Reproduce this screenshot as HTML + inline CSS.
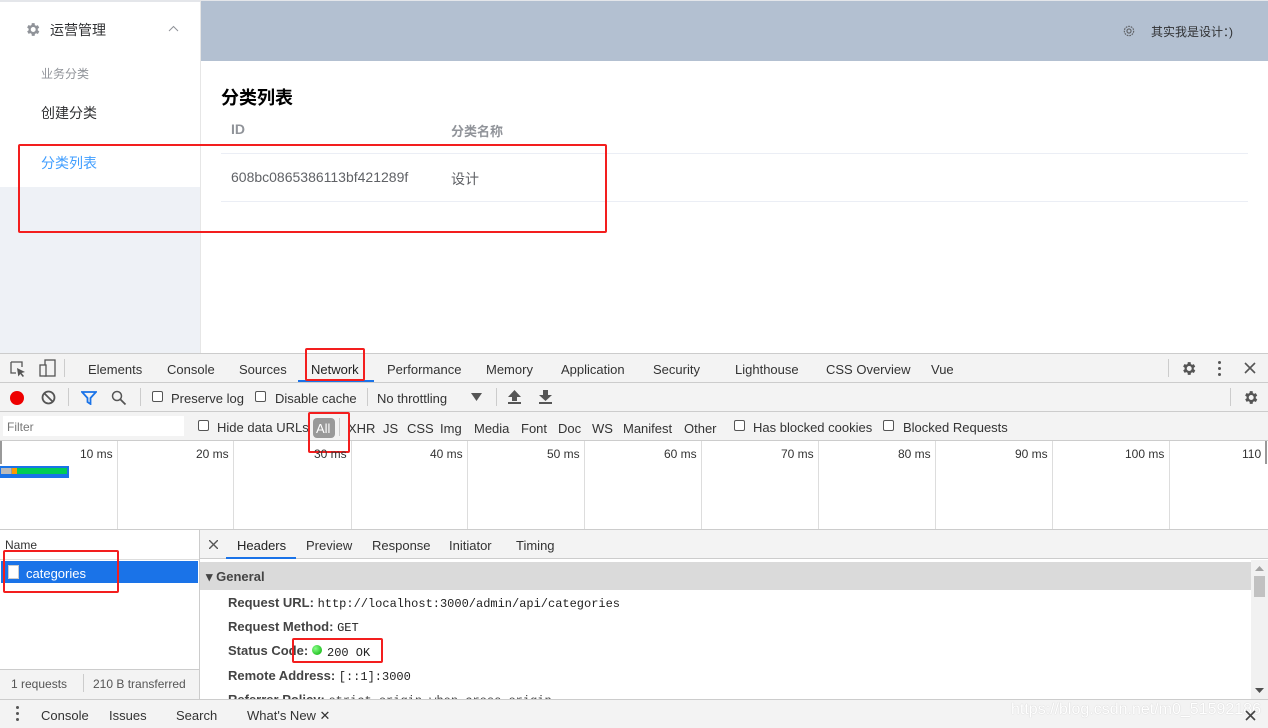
<!DOCTYPE html>
<html><head><meta charset="utf-8"><style>
*{margin:0;padding:0;box-sizing:border-box}
body{width:1268px;height:728px;overflow:hidden;position:relative;background:#fff;font-family:"Liberation Sans","Noto Sans CJK SC",sans-serif;color:#333}
.a{position:absolute;white-space:nowrap}
.t{font-size:13px;color:#333}
.cb{position:absolute;width:11px;height:11px;border:1px solid #555;border-radius:2px;background:#fff}
.red{position:absolute;border:2px solid #f31e1e;border-radius:2px}
.vl{position:absolute;width:1px;background:#ccc}
.mono{font-family:"Liberation Mono",monospace;font-size:12px}
</style></head><body>
<!-- app -->
<div class="a" style="left:0;top:0;width:1268px;height:2px;background:#e4e6ea"></div>
<div class="a" style="left:0;top:2px;width:201px;height:185px;background:#fff"></div>
<div class="a" style="left:0;top:187px;width:201px;height:166px;background:#eef1f6"></div>
<div class="a" style="left:200px;top:0;width:1px;height:353px;background:#e6e6e6"></div>
<div class="a" style="left:201px;top:1px;width:1067px;height:60px;background:#b3c0d1"></div>
<svg class="a" style="left:24px;top:21px" width="17" height="17" viewBox="0 0 24 24"><path fill="#909399" d="M19.4 13a7.5 7.5 0 0 0 0-2l2.1-1.6-2-3.5-2.5 1a7 7 0 0 0-1.7-1L15 3h-4l-.4 2.7a7 7 0 0 0-1.7 1l-2.5-1-2 3.5L6.6 11a7.5 7.5 0 0 0 0 2l-2.1 1.6 2 3.5 2.5-1a7 7 0 0 0 1.7 1L11 21h4l.4-2.7a7 7 0 0 0 1.7-1l2.5 1 2-3.5zM13 15.5a3.5 3.5 0 1 1 0-7 3.5 3.5 0 0 1 0 7z"/></svg>
<div class="a" style="left:50px;top:20px;font-size:14px;color:#303133">运营管理</div>
<svg class="a" style="left:168px;top:25px" width="11" height="7"><path d="M1 6L5.5 1.5 10 6" fill="none" stroke="#909399" stroke-width="1"/></svg>
<div class="a" style="left:41px;top:65px;font-size:12px;color:#909399">业务分类</div>
<div class="a" style="left:41px;top:103px;font-size:14px;color:#303133">创建分类</div>
<div class="a" style="left:41px;top:153px;font-size:14px;color:#409eff">分类列表</div>
<svg class="a" style="left:1122px;top:24px" width="14" height="14" viewBox="0 0 24 24"><circle cx="12" cy="12" r="8" fill="none" stroke="#606266" stroke-width="2" stroke-dasharray="3 1.5"/><circle cx="12" cy="12" r="3.5" fill="none" stroke="#606266" stroke-width="2"/></svg>
<div class="a" style="left:1151px;top:23px;font-size:12px;color:#303133">其实我是设计：)</div>
<div class="a" style="left:221px;top:84px;font-size:18px;font-weight:bold;color:#000">分类列表</div>
<div class="a" style="left:231px;top:121px;font-size:14px;font-weight:bold;color:#909399">ID</div>
<div class="a" style="left:451px;top:121px;font-size:13px;font-weight:bold;color:#909399">分类名称</div>
<div class="a" style="left:221px;top:153px;width:1027px;height:1px;background:#ebeef5"></div>
<div class="a" style="left:231px;top:169px;font-size:14px;color:#606266">608bc0865386113bf421289f</div>
<div class="a" style="left:451px;top:169px;font-size:14px;color:#606266">设计</div>
<div class="a" style="left:221px;top:201px;width:1027px;height:1px;background:#ebeef5"></div>
<div class="red" style="left:18px;top:144px;width:589px;height:89px"></div>

<!-- devtools tabs -->
<div class="a" style="left:0;top:353px;width:1268px;height:30px;background:#f3f3f3;border-top:1px solid #ccc;border-bottom:1px solid #ccc"></div>
<svg class="a" style="left:9px;top:360px" width="18" height="18"><path d="M2 2h11v5M2 2v11h5" fill="none" stroke="#555" stroke-width="1.3"/><path d="M8 8l8 4-3.5 1 2.5 3-1.2 1-2.5-3-2 2.5z" fill="#555"/></svg>
<svg class="a" style="left:38px;top:359px" width="20" height="20"><rect x="7" y="1" width="10" height="16" fill="none" stroke="#555" stroke-width="1.3"/><rect x="2" y="6" width="6" height="11" fill="#f3f3f3" stroke="#555" stroke-width="1.3"/></svg>
<div class="vl" style="left:64px;top:359px;height:18px"></div>
<div class="a t" style="left:88px;top:362px">Elements</div>
<div class="a t" style="left:167px;top:362px">Console</div>
<div class="a t" style="left:239px;top:362px">Sources</div>
<div class="a t" style="left:311px;top:362px;color:#222">Network</div>
<div class="a" style="left:298px;top:380px;width:76px;height:2px;background:#1a73e8"></div>
<div class="a t" style="left:387px;top:362px">Performance</div>
<div class="a t" style="left:486px;top:362px">Memory</div>
<div class="a t" style="left:561px;top:362px">Application</div>
<div class="a t" style="left:653px;top:362px">Security</div>
<div class="a t" style="left:735px;top:362px">Lighthouse</div>
<div class="a t" style="left:826px;top:362px">CSS Overview</div>
<div class="a t" style="left:931px;top:362px">Vue</div>
<div class="vl" style="left:1168px;top:359px;height:18px"></div>
<svg class="a" style="left:1180px;top:360px" width="17" height="17" viewBox="0 0 24 24"><path fill="#555" d="M19.4 13a7.5 7.5 0 0 0 0-2l2.1-1.6-2-3.5-2.5 1a7 7 0 0 0-1.7-1L15 3h-4l-.4 2.7a7 7 0 0 0-1.7 1l-2.5-1-2 3.5L6.6 11a7.5 7.5 0 0 0 0 2l-2.1 1.6 2 3.5 2.5-1a7 7 0 0 0 1.7 1L11 21h4l.4-2.7a7 7 0 0 0 1.7-1l2.5 1 2-3.5zM13 15.5a3.5 3.5 0 1 1 0-7 3.5 3.5 0 0 1 0 7z"/></svg>
<div class="a" style="left:1218px;top:361px;width:3px;height:3px;background:#555;border-radius:50%;box-shadow:0 6px 0 #555,0 12px 0 #555"></div>
<svg class="a" style="left:1244px;top:362px" width="12" height="12"><path d="M1 1l10 10M11 1L1 11" stroke="#555" stroke-width="1.6"/></svg>
<div class="red" style="left:305px;top:348px;width:60px;height:33px"></div>

<!-- toolbar -->
<div class="a" style="left:0;top:383px;width:1268px;height:29px;background:#f3f3f3;border-bottom:1px solid #ccc"></div>
<div class="a" style="left:10px;top:391px;width:14px;height:14px;border-radius:50%;background:#e00"></div>
<svg class="a" style="left:41px;top:390px" width="15" height="15"><circle cx="7.5" cy="7.5" r="6" fill="none" stroke="#555" stroke-width="1.8"/><path d="M3.5 3.5l8 8" stroke="#555" stroke-width="1.8"/></svg>
<div class="vl" style="left:68px;top:388px;height:18px"></div>
<svg class="a" style="left:81px;top:391px" width="16" height="14"><path d="M1 1h14l-5.5 6v6l-3-2V7z" fill="none" stroke="#1a73e8" stroke-width="1.8"/></svg>
<svg class="a" style="left:111px;top:390px" width="16" height="16"><circle cx="6" cy="6" r="4.5" fill="none" stroke="#555" stroke-width="1.5"/><path d="M9.5 9.5l5 5" stroke="#555" stroke-width="1.8"/></svg>
<div class="vl" style="left:140px;top:388px;height:18px"></div>
<div class="cb" style="left:152px;top:391px"></div>
<div class="a t" style="left:171px;top:391px">Preserve log</div>
<div class="cb" style="left:255px;top:391px"></div>
<div class="a t" style="left:275px;top:391px">Disable cache</div>
<div class="vl" style="left:367px;top:388px;height:18px"></div>
<div class="a t" style="left:377px;top:391px">No throttling</div>
<svg class="a" style="left:471px;top:393px" width="11" height="8"><path d="M0 0h11L5.5 8z" fill="#555"/></svg>
<div class="vl" style="left:496px;top:388px;height:18px"></div>
<svg class="a" style="left:508px;top:390px" width="13" height="14"><path d="M6.5 0L13 7H9v4H4V7H0z M0 12h13v2H0z" fill="#555"/></svg>
<svg class="a" style="left:539px;top:390px" width="13" height="14"><path d="M4 0h5v5h4L6.5 11 0 5h4z M0 12h13v2H0z" fill="#555"/></svg>
<div class="vl" style="left:1230px;top:388px;height:18px"></div>
<svg class="a" style="left:1242px;top:389px" width="17" height="17" viewBox="0 0 24 24"><path fill="#555" d="M19.4 13a7.5 7.5 0 0 0 0-2l2.1-1.6-2-3.5-2.5 1a7 7 0 0 0-1.7-1L15 3h-4l-.4 2.7a7 7 0 0 0-1.7 1l-2.5-1-2 3.5L6.6 11a7.5 7.5 0 0 0 0 2l-2.1 1.6 2 3.5 2.5-1a7 7 0 0 0 1.7 1L11 21h4l.4-2.7a7 7 0 0 0 1.7-1l2.5 1 2-3.5zM13 15.5a3.5 3.5 0 1 1 0-7 3.5 3.5 0 0 1 0 7z"/></svg>

<!-- filter bar -->
<div class="a" style="left:0;top:412px;width:1268px;height:29px;background:#f3f3f3;border-bottom:1px solid #ccc"></div>
<div class="a" style="left:3px;top:416px;width:181px;height:20px;background:#fff"></div>
<div class="a" style="left:7px;top:420px;font-size:12px;color:#777">Filter</div>
<div class="cb" style="left:198px;top:420px"></div>
<div class="a t" style="left:217px;top:420px">Hide data URLs</div>
<div class="a" style="left:313px;top:418px;width:22px;height:20px;background:#999;border-radius:4px"></div>
<div class="a t" style="left:316px;top:421px;color:#fff">All</div>
<div class="vl" style="left:339px;top:418px;height:18px"></div>
<div class="a t" style="left:348px;top:421px">XHR</div>
<div class="a t" style="left:383px;top:421px">JS</div>
<div class="a t" style="left:407px;top:421px">CSS</div>
<div class="a t" style="left:440px;top:421px">Img</div>
<div class="a t" style="left:474px;top:421px">Media</div>
<div class="a t" style="left:521px;top:421px">Font</div>
<div class="a t" style="left:558px;top:421px">Doc</div>
<div class="a t" style="left:592px;top:421px">WS</div>
<div class="a t" style="left:623px;top:421px">Manifest</div>
<div class="a t" style="left:684px;top:421px">Other</div>
<div class="cb" style="left:734px;top:420px"></div>
<div class="a t" style="left:753px;top:420px">Has blocked cookies</div>
<div class="cb" style="left:883px;top:420px"></div>
<div class="a t" style="left:903px;top:420px">Blocked Requests</div>
<div class="red" style="left:308px;top:412px;width:42px;height:41px"></div>

<!-- timeline -->
<div class="a" style="left:0;top:441px;width:2px;height:23px;background:#999"></div>
<div class="vl" style="left:117px;top:441px;height:88px;background:#ddd"></div>
<div class="vl" style="left:233px;top:441px;height:88px;background:#ddd"></div>
<div class="vl" style="left:351px;top:441px;height:88px;background:#ddd"></div>
<div class="vl" style="left:467px;top:441px;height:88px;background:#ddd"></div>
<div class="vl" style="left:584px;top:441px;height:88px;background:#ddd"></div>
<div class="vl" style="left:701px;top:441px;height:88px;background:#ddd"></div>
<div class="vl" style="left:818px;top:441px;height:88px;background:#ddd"></div>
<div class="vl" style="left:935px;top:441px;height:88px;background:#ddd"></div>
<div class="vl" style="left:1052px;top:441px;height:88px;background:#ddd"></div>
<div class="vl" style="left:1169px;top:441px;height:88px;background:#ddd"></div>
<div class="a" style="left:1265px;top:441px;width:2px;height:23px;background:#999"></div>
<div class="a t" style="left:80px;top:447px;font-size:12px">10 ms</div>
<div class="a t" style="left:196px;top:447px;font-size:12px">20 ms</div>
<div class="a t" style="left:314px;top:447px;font-size:12px">30 ms</div>
<div class="a t" style="left:430px;top:447px;font-size:12px">40 ms</div>
<div class="a t" style="left:547px;top:447px;font-size:12px">50 ms</div>
<div class="a t" style="left:664px;top:447px;font-size:12px">60 ms</div>
<div class="a t" style="left:781px;top:447px;font-size:12px">70 ms</div>
<div class="a t" style="left:898px;top:447px;font-size:12px">80 ms</div>
<div class="a t" style="left:1015px;top:447px;font-size:12px">90 ms</div>
<div class="a t" style="left:1125px;top:447px;font-size:12px">100 ms</div>
<div class="a t" style="left:1242px;top:447px;font-size:12px">110</div>
<div class="a" style="left:0;top:466px;width:69px;height:12px;background:#1a73e8"></div>
<div class="a" style="left:1px;top:468px;width:66px;height:6px;background:#0c5"></div>
<div class="a" style="left:1px;top:468px;width:10px;height:6px;background:#bbb"></div>
<div class="a" style="left:11px;top:468px;width:5px;height:6px;background:#999"></div>
<div class="a" style="left:12px;top:468px;width:5px;height:6px;background:#f90"></div>
<div class="a" style="left:0;top:529px;width:1268px;height:1px;background:#ccc"></div>

<!-- bottom panes -->
<div class="a" style="left:0;top:530px;width:199px;height:139px;background:#fff"></div>
<div class="a" style="left:199px;top:530px;width:1px;height:169px;background:#ccc"></div>
<div class="a" style="left:0;top:559px;width:199px;height:1px;background:#ddd"></div>
<div class="a t" style="left:5px;top:538px;font-size:12px">Name</div>
<div class="a" style="left:1px;top:561px;width:197px;height:22px;background:#1a73e8"></div>
<div class="a" style="left:8px;top:565px;width:11px;height:14px;background:#fff;border:1px solid #ccc"></div>
<div class="a t" style="left:26px;top:566px;color:#fff">categories</div>
<div class="red" style="left:3px;top:550px;width:116px;height:43px"></div>
<div class="a" style="left:0;top:669px;width:199px;height:30px;background:#f3f3f3;border-top:1px solid #ccc"></div>
<div class="a t" style="left:11px;top:677px;font-size:12px;color:#555">1 requests</div>
<div class="vl" style="left:83px;top:674px;height:18px"></div>
<div class="a t" style="left:93px;top:677px;font-size:12px;color:#555">210 B transferred</div>

<div class="a" style="left:200px;top:530px;width:1068px;height:29px;background:#f3f3f3;border-bottom:1px solid #ccc"></div>
<svg class="a" style="left:209px;top:540px" width="9" height="9"><path d="M0 0l9 9M9 0L0 9" stroke="#555" stroke-width="1.4"/></svg>
<div class="a t" style="left:237px;top:538px;color:#222">Headers</div>
<div class="a" style="left:226px;top:557px;width:70px;height:2px;background:#1a73e8"></div>
<div class="a t" style="left:306px;top:538px">Preview</div>
<div class="a t" style="left:372px;top:538px">Response</div>
<div class="a t" style="left:449px;top:538px">Initiator</div>
<div class="a t" style="left:516px;top:538px">Timing</div>
<div class="a" style="left:200px;top:562px;width:1051px;height:28px;background:#dadada"></div>
<div class="a t" style="left:206px;top:569px;font-size:13px;font-weight:bold;color:#444">▾ General</div>
<div class="a" style="left:1251px;top:560px;width:17px;height:139px;background:#f1f1f1"></div>
<div class="a" style="left:1254px;top:576px;width:11px;height:21px;background:#c1c1c1"></div>
<svg class="a" style="left:1255px;top:566px" width="9" height="5"><path d="M0 5L4.5 0 9 5z" fill="#a3a3a3"/></svg>
<svg class="a" style="left:1255px;top:688px" width="9" height="5"><path d="M0 0h9L4.5 5z" fill="#505050"/></svg>
<div class="a t" style="left:228px;top:595px;font-weight:bold;color:#444">Request URL: <span class="mono" style="font-weight:normal;color:#222">http://localhost:3000/admin/api/categories</span></div>
<div class="a t" style="left:228px;top:619px;font-weight:bold;color:#444">Request Method: <span class="mono" style="font-weight:normal;color:#222">GET</span></div>
<div class="a t" style="left:228px;top:643px;font-weight:bold;color:#444">Status Code:</div>
<div class="a" style="left:312px;top:645px;width:10px;height:10px;border-radius:50%;background:radial-gradient(circle at 35% 35%,#8f8,#0a0)"></div>
<div class="a mono" style="left:327px;top:646px;color:#222">200 OK</div>
<div class="red" style="left:292px;top:638px;width:91px;height:25px"></div>
<div class="a t" style="left:228px;top:668px;font-weight:bold;color:#444">Remote Address: <span class="mono" style="font-weight:normal;color:#222">[::1]:3000</span></div>
<div class="a t" style="left:228px;top:692px;font-weight:bold;color:#444;height:7px;overflow:hidden">Referrer Policy: <span class="mono" style="font-weight:normal">strict-origin-when-cross-origin</span></div>

<!-- drawer -->
<div class="a" style="left:0;top:699px;width:1268px;height:29px;background:#f3f3f3;border-top:1px solid #ccc"></div>
<div class="a" style="left:16px;top:706px;width:3px;height:3px;background:#555;border-radius:50%;box-shadow:0 6px 0 #555,0 12px 0 #555"></div>
<div class="a t" style="left:41px;top:708px">Console</div>
<div class="a t" style="left:109px;top:708px">Issues</div>
<div class="a t" style="left:176px;top:708px">Search</div>
<div class="a t" style="left:247px;top:708px">What's New ✕</div>
<div class="a" style="left:1011px;top:701px;font-size:16px;color:#fff;text-shadow:0 0 1px #bbb">https://blog.csdn.net/m0_51592186</div>
<svg class="a" style="left:1245px;top:710px" width="11" height="11"><path d="M1 1l9 9M10 1L1 10" stroke="#444" stroke-width="1.6"/></svg>
</body></html>
